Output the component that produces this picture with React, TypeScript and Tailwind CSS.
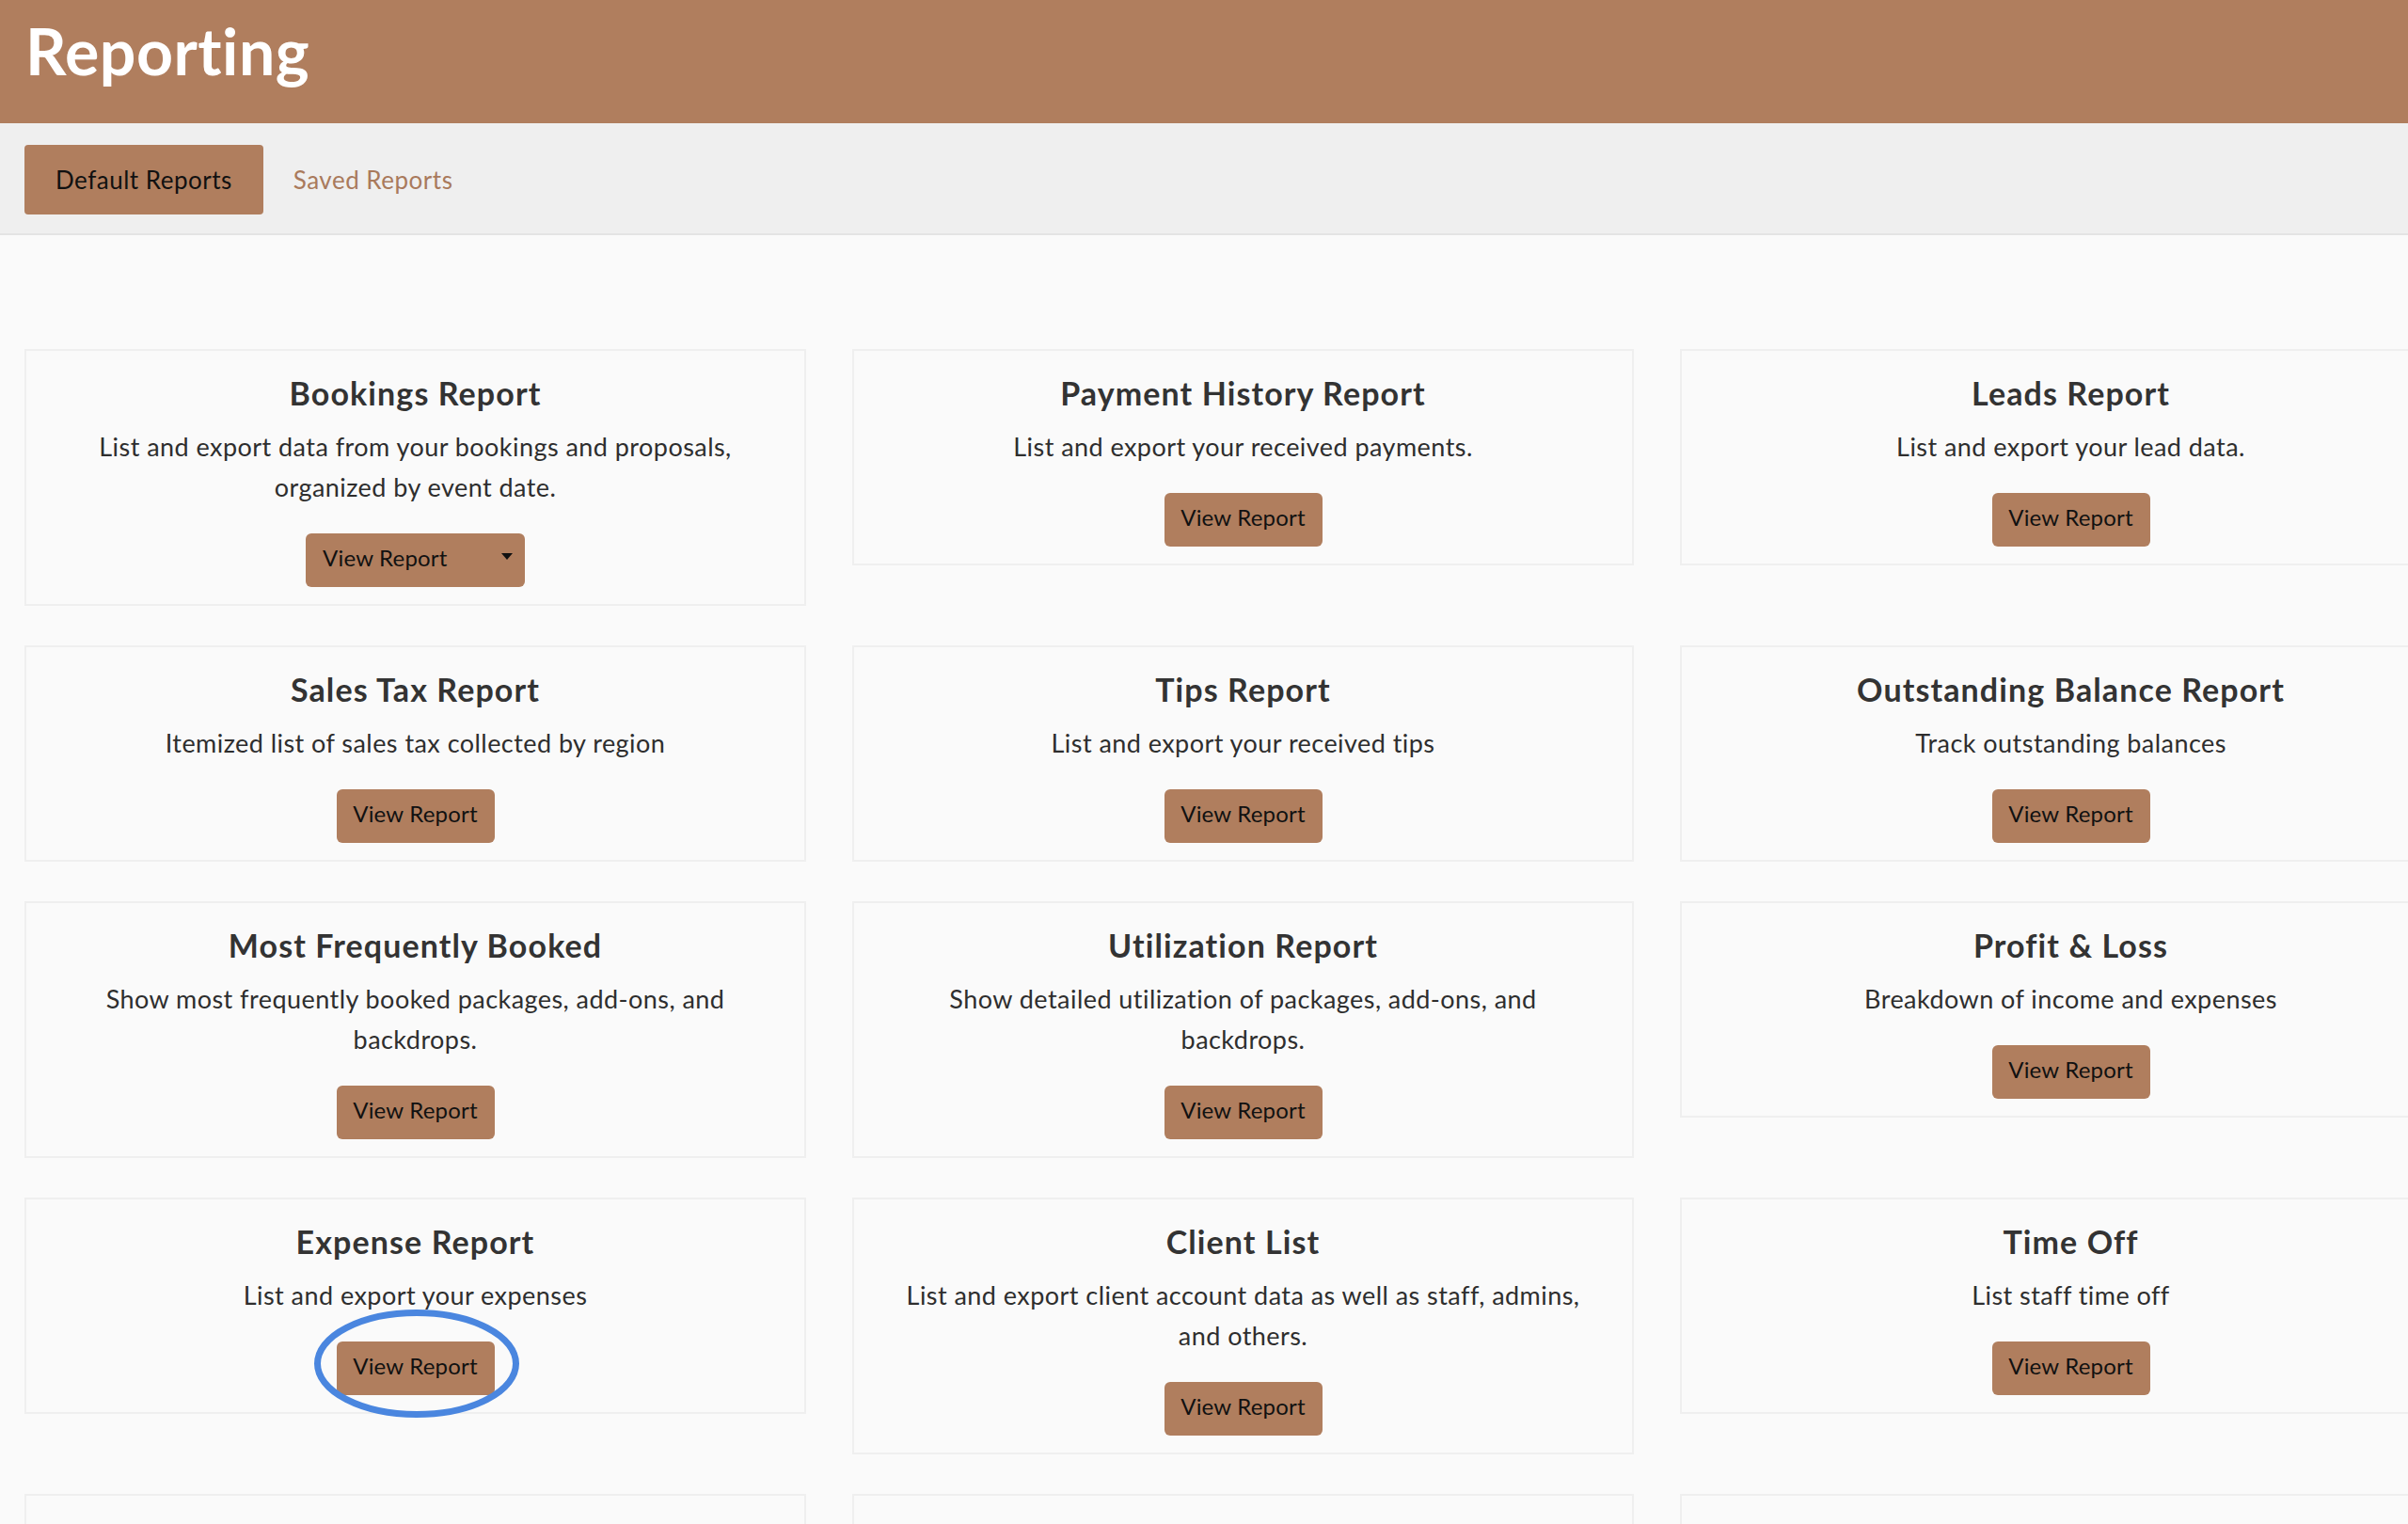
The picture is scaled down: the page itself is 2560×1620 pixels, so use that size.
import React from "react";

type Report = {
  title: string;
  lines: string[];
  dropdown?: boolean;
  circled?: boolean;
};

const reports: Report[] = [
  {
    title: "Bookings Report",
    lines: ["List and export data from your bookings and proposals,", "organized by event date."],
    dropdown: true,
  },
  { title: "Payment History Report", lines: ["List and export your received payments."] },
  { title: "Leads Report", lines: ["List and export your lead data."] },
  { title: "Sales Tax Report", lines: ["Itemized list of sales tax collected by region"] },
  { title: "Tips Report", lines: ["List and export your received tips"] },
  { title: "Outstanding Balance Report", lines: ["Track outstanding balances"] },
  {
    title: "Most Frequently Booked",
    lines: ["Show most frequently booked packages, add-ons, and", "backdrops."],
  },
  {
    title: "Utilization Report",
    lines: ["Show detailed utilization of packages, add-ons, and", "backdrops."],
  },
  { title: "Profit & Loss", lines: ["Breakdown of income and expenses"] },
  { title: "Expense Report", lines: ["List and export your expenses"], circled: true },
  {
    title: "Client List",
    lines: ["List and export client account data as well as staff, admins,", "and others."],
  },
  { title: "Time Off", lines: ["List staff time off"] },
];

function ReportCard({ report }: { report: Report }) {
  return (
    <div className="flex flex-col items-center border-2 border-[#efefef] bg-[#fafafa] px-6 pt-[24px] pb-[18px] text-center">
      <h2 className="text-[34px] leading-[41px] font-bold tracking-[1.1px] text-[#333333]">{report.title}</h2>
      <p className="mt-[15px] text-[27px] leading-[43px] tracking-[0.45px] text-[#2e2e2e]">
        {report.lines.map((line, i) => (
          <span key={i} className="block">
            {line}
          </span>
        ))}
      </p>
      <div className="relative mt-[28px]">
        {report.dropdown ? (
          <button className="flex h-[57px] w-[233px] items-center justify-between rounded-[6px] bg-[#b07e5e] pr-[13px] pb-[6px] pl-[18px] text-[24px] tracking-[0.2px] text-[#111111]">
            <span>View Report</span>
            <svg width="12" height="8" viewBox="0 0 12 8" className="-mt-[2px]">
              <path d="M0 0h12L6 7z" fill="#111111" />
            </svg>
          </button>
        ) : (
          <button className="flex h-[57px] w-[168px] items-center justify-center rounded-[6px] bg-[#b07e5e] pb-[6px] text-[24px] tracking-[0.2px] text-[#111111]">
            View Report
          </button>
        )}
        {report.circled && (
          <svg
            width="218"
            height="115"
            viewBox="0 0 218 115"
            className="pointer-events-none absolute top-[-34px] left-[-24px]"
          >
            <ellipse cx="109" cy="57.5" rx="105.5" ry="54" fill="none" stroke="#4a86df" strokeWidth="7" />
          </svg>
        )}
      </div>
    </div>
  );
}

export default function App() {
  return (
    <div className="min-h-screen w-full overflow-hidden bg-[#fafafa] font-['Lato',sans-serif]">
      {/* Page header */}
      <header className="h-[131px] bg-[#b07e5e] px-[27px] pt-[20px]">
        <h1 className="text-[68px] leading-[68px] font-bold tracking-[0.5px] text-white">Reporting</h1>
      </header>

      {/* Tabs */}
      <nav className="flex h-[119px] items-start border-b-2 border-[#e4e4e4] bg-[#efefef] px-[26px] pt-[23px]">
        <button className="h-[74px] rounded-[4px] bg-[#b07e5e] px-[33px] text-[26px] tracking-[0.5px] text-[#111111]">
          Default Reports
        </button>
        <button className="h-[74px] px-[32px] text-[26px] tracking-[0.5px] text-[#a97a5c]">Saved Reports</button>
      </nav>

      {/* Report cards */}
      <main className="grid grid-cols-[831px_831px_831px] items-start gap-x-[49px] gap-y-[42px] px-[26px] pt-[121px]">
        {reports.map((r) => (
          <ReportCard key={r.title} report={r} />
        ))}
        <div className="h-[230px] border-2 border-[#efefef]" />
        <div className="h-[230px] border-2 border-[#efefef]" />
        <div className="h-[230px] border-2 border-[#efefef]" />
      </main>
    </div>
  );
}
